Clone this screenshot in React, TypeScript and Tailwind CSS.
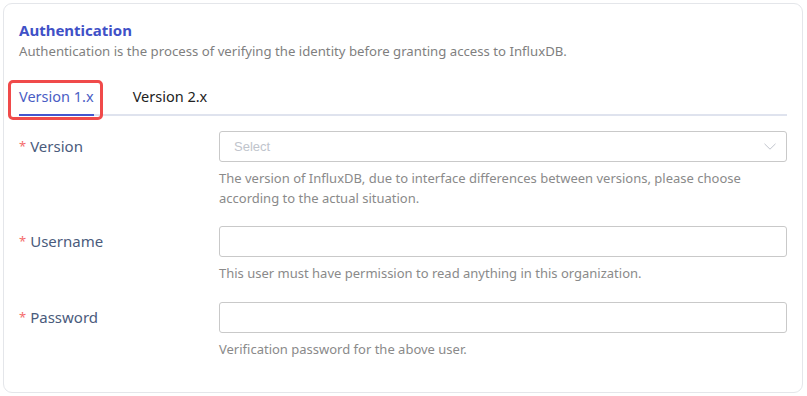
import React from "react";

function Chevron() {
  return (
    <svg width="12" height="7" viewBox="0 0 12 7" fill="none">
      <path d="M0.5 0.8l5.5 5.4 5.5-5.4" stroke="#c0c4cc" strokeWidth="1" />
    </svg>
  );
}

function Row({
  label,
  children,
  help,
}: {
  label: string;
  children: React.ReactNode;
  help: React.ReactNode;
}) {
  return (
    <div className="flex">
      <div className="w-[200px] shrink-0 h-[31px] flex items-center text-[15px] text-[#4a5b7c]">
        <span className="text-[#f56c6c] text-[13px] mr-[4px]">*</span>
        {label}
      </div>
      <div className="flex-1">
        {children}
        <div className="mt-[6px] text-[13px] leading-[20px] text-[#8a8a8a]">{help}</div>
      </div>
    </div>
  );
}

export default function App() {
  return (
    <div className="w-[807px] h-[396px] bg-white p-[3px] pr-[4px]" style={{ fontFamily: '"Noto Sans", "Open Sans", sans-serif' }}>
      <div className="h-[390px] border border-[#e4e6ea] rounded-[9px] pt-[16px] px-[15px]">
        <div className="text-[15px] leading-[20px] font-bold text-[#3f51c7]">Authentication</div>
        <div className="mt-[1px] text-[13.2px] leading-[20px] text-[#7f7f7f]">
          Authentication is the process of verifying the identity before granting access to InfluxDB.
        </div>
        <div className="mt-[25px] flex gap-[39px] border-b-2 border-[#dfe3ee]">
          <div className="relative pb-[8px] -mb-[2px] border-b-2 border-[#4356cf] text-[14.5px] leading-[20px] text-[#4a5dc4]">
            Version 1.x
            <div className="absolute -left-[11px] -right-[9px] -top-[6px] -bottom-[6px] border-[3px] border-[#f04a4a] rounded-[5px]" />
          </div>
          <div className="pb-[8px] text-[14.5px] leading-[20px] text-[#222]">Version 2.x</div>
        </div>

        <div className="mt-[15px] flex flex-col">
          <Row
            label="Version"
            help={
              <>
                The version of InfluxDB, due to interface differences between versions, please choose
                <br />
                according to the actual situation.
              </>
            }
          >
            <div className="h-[31px] border border-[#c9c9c9] rounded-[3px] flex items-center justify-between pl-[14px] pr-[10px]">
              <span className="text-[13px] text-[#c0c4cc]" style={{ fontFamily: '"Liberation Sans", Arial, sans-serif' }}>
                Select
              </span>
              <Chevron />
            </div>
          </Row>
          <div className="h-[18px]" />
          <Row label="Username" help="This user must have permission to read anything in this organization.">
            <div className="h-[31px] border border-[#c9c9c9] rounded-[3px]" />
          </Row>
          <div className="h-[19px]" />
          <Row label="Password" help="Verification password for the above user.">
            <div className="h-[31px] border border-[#c9c9c9] rounded-[3px]" />
          </Row>
        </div>
      </div>
    </div>
  );
}
